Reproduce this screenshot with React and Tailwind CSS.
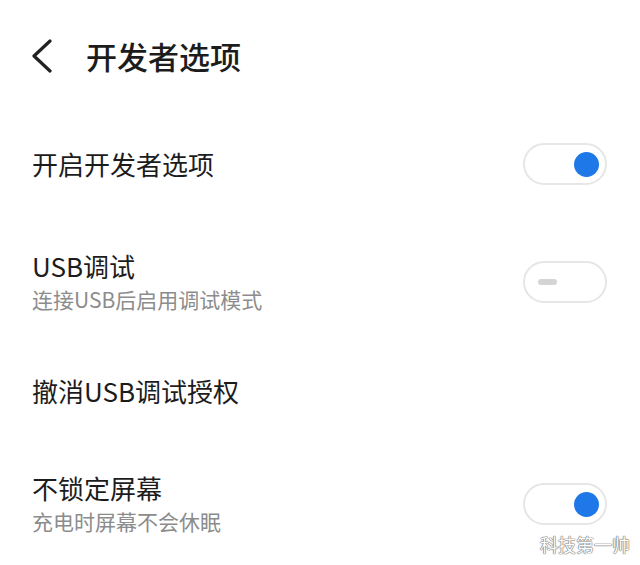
import React from 'react'

const ROWS = [
  { title: '开启开发者选项', toggle: 'on', h: 'h-[104px]' },
  { title: 'USB调试', sub: '连接USB后启用调试模式', toggle: 'off', h: 'h-[132px]' },
  { title: '撤消USB调试授权', h: 'h-[86px]' },
  { title: '不锁定屏幕', sub: '充电时屏幕不会休眠', toggle: 'on', h: 'h-[140px]' }
]

// pill switch: blue knob on the right when on, grey dash on the left when off
function Toggle({ on }) {
  return (
    <div
      className={
        'flex h-[42px] w-[84px] shrink-0 items-center rounded-full border-2 border-[#e6e6e6] bg-white ' +
        (on ? 'justify-end pr-[6px]' : 'justify-start pl-[13px]')
      }
    >
      {on ? (
        <div className="h-[25px] w-[25px] rounded-full bg-[#1f78e8]" />
      ) : (
        <div className="h-[6px] w-[19px] rounded-full bg-[#d4d4d4]" />
      )}
    </div>
  )
}

function Row({ title, sub, toggle, h }) {
  return (
    <div className={`flex items-center justify-between pl-[32px] pr-[33px] ${h}`}>
      <div className="flex flex-col">
        <span className="text-[26px] leading-[32px] text-[#1c1c1c]">{title}</span>
        {sub && <span className="mt-[1px] text-[21px] leading-[32px] text-[#8c8c8c]">{sub}</span>}
      </div>
      {toggle && <Toggle on={toggle === 'on'} />}
    </div>
  )
}

export default function App() {
  return (
    <div className="relative h-[565px] w-[640px] overflow-hidden bg-white font-['Noto_Sans_CJK_SC','Noto_Sans',sans-serif]">
      <div className="flex h-[112px] items-center pl-[30px]">
        <svg width="24" height="34" viewBox="0 0 24 34" fill="none" className="shrink-0">
          <polyline points="20,2 4,17 20,32" stroke="#222" strokeWidth="3.2" strokeLinecap="round" strokeLinejoin="round" />
        </svg>
        <span className="ml-[32px] text-[31px] font-medium leading-[40px] text-[#1c1c1c]">开发者选项</span>
      </div>
      {ROWS.map((r) => (
        <Row key={r.title} {...r} />
      ))}
      <span className="absolute bottom-[10px] right-[10px] text-[18px] leading-[22px] text-white [text-shadow:0_0_1px_#666,0_0_1px_#666,0_0_1px_#666]">
        科技第一帅
      </span>
    </div>
  )
}
